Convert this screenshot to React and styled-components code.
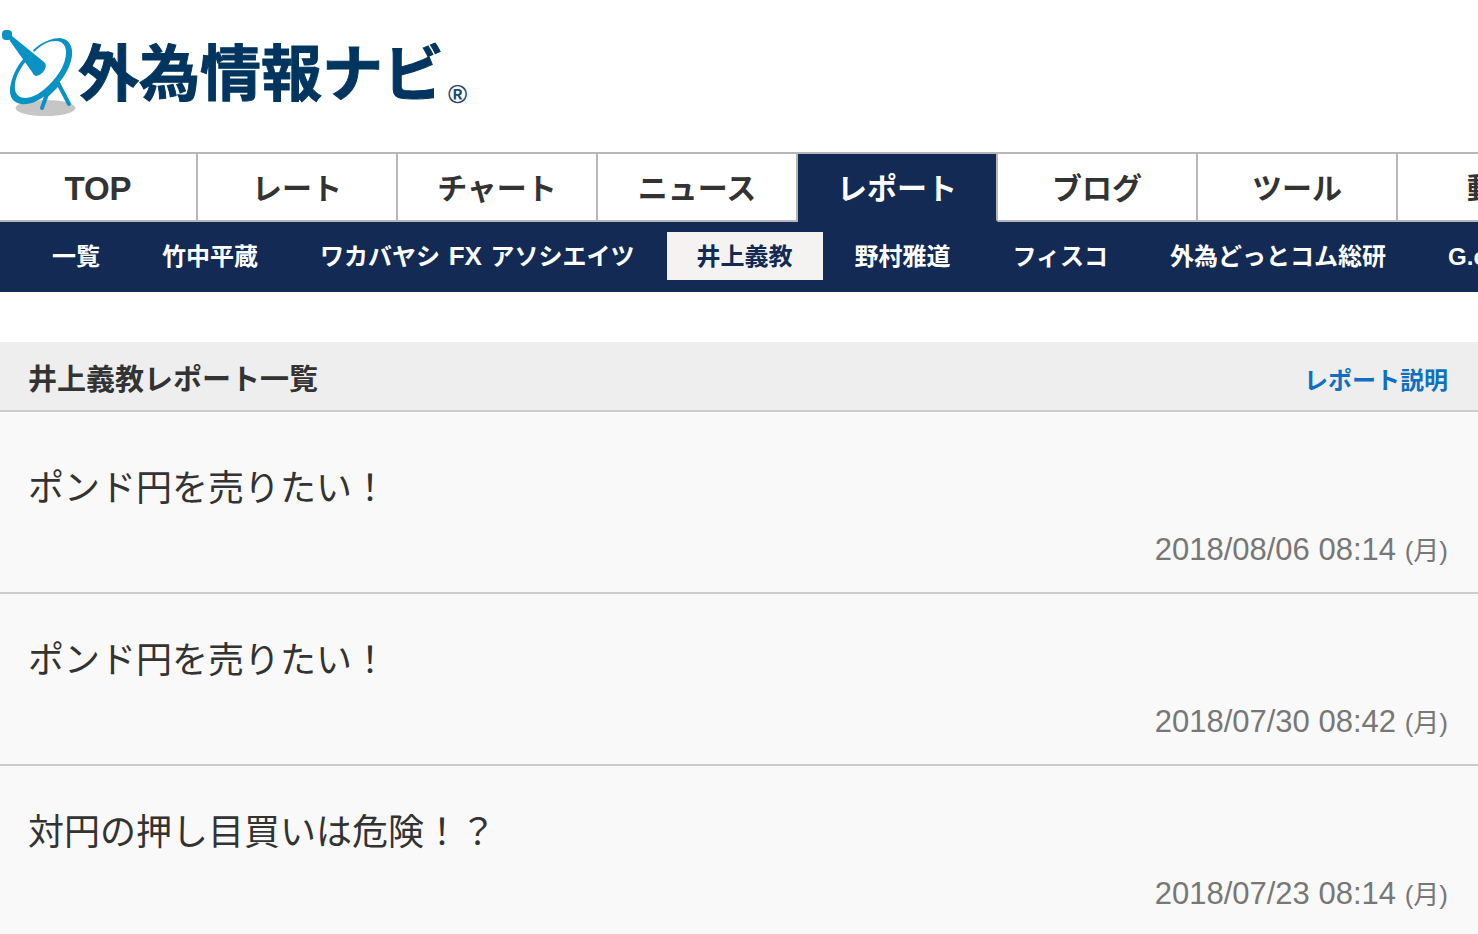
import React, { useState } from "react";
import styled, { createGlobalStyle } from "styled-components";

const GlobalStyle = createGlobalStyle`
  * {
    box-sizing: border-box;
  }
  body {
    margin: 0;
    background: #fff;
    color: #333;
    font-family: "Liberation Sans", "Noto Sans CJK JP", sans-serif;
    overflow-x: hidden;
  }
  a {
    color: inherit;
    text-decoration: none;
  }
`;

const Header = styled.header`
  height: 152px;
  padding-top: 28px;
`;

const Logo = styled.a`
  display: inline-flex;
  align-items: flex-start;
  color: #00355f;
  svg {
    flex: none;
  }
`;

const LogoText = styled.span`
  padding: 2px 4px 0 0;
  font-size: 61px;
  font-weight: 700;
  line-height: 90px;
  white-space: nowrap;
  -webkit-text-stroke: 1px #00355f;
`;

const Registered = styled.sup`
  align-self: flex-end;
  padding-bottom: 12px;
  font-size: 26px;
  font-weight: 700;
  line-height: 28px;
  color: #1f4a70;
`;

const TabBar = styled.nav`
  display: flex;
  border-top: 2px solid #b7b7b7;
  overflow: hidden;
`;

const Tab = styled.a`
  flex: 0 0 200px;
  height: 68px;
  border-right: 2px solid #b7b7b7;
  border-bottom: 2px solid ${({ $active }) => ($active ? "#122a54" : "#b7b7b7")};
  background: ${({ $active }) => ($active ? "#122a54" : "#fff")};
  color: ${({ $active }) => ($active ? "#fff" : "#333")};
  font-size: ${({ $latin }) => ($latin ? "33px" : "30px")};
  font-weight: 700;
  line-height: 70px;
  text-align: center;
  &:first-child {
    flex-basis: 198px;
  }
`;

const SubNav = styled.nav`
  display: flex;
  align-items: flex-start;
  gap: 2px;
  height: 70px;
  padding: 10px 22px;
  background: #122a54;
  overflow: hidden;
`;

const SubLink = styled.a`
  flex: none;
  padding: 0 30px;
  background: ${({ $active }) => ($active ? "#f4f3f2" : "transparent")};
  color: ${({ $active }) => ($active ? "#122a54" : "#fff")};
  font-size: 24px;
  font-weight: 700;
  line-height: 50px;
  height: 48px;
  white-space: nowrap;
`;

const Latin = styled.span`
  font-size: 26px;
  line-height: 1;
  margin: 0 2px;
`;

const Section = styled.main`
  margin-top: 50px;
`;

const SectionHead = styled.div`
  display: flex;
  align-items: center;
  justify-content: space-between;
  height: 70px;
  padding: 2px 30px 0 28px;
  background: #eee;
  border-bottom: 2px solid #ccc;
`;

const Heading = styled.h1`
  margin: 0;
  font-size: 29px;
  font-weight: 700;
`;

const HelpLink = styled.a`
  && {
    color: #1070c0;
  }
  padding-top: 2px;
  font-size: 24px;
  font-weight: 700;
`;

const List = styled.ul`
  margin: 0;
  padding: 10px 0 0;
  list-style: none;
  background: #f9f9f9;
`;

const Item = styled.li`
  border-bottom: 2px solid #ccc;
`;

const ItemLink = styled.a`
  display: flex;
  flex-direction: column;
  padding: 40px 30px 20px 28px;
`;

const Title = styled.span`
  font-size: 36px;
  line-height: 54px;
`;

const Time = styled.time`
  align-self: flex-end;
  margin-top: 12px;
  color: #777;
  font-size: 31px;
  line-height: 44px;
`;

const Day = styled.span`
  font-size: 26px;
  line-height: 1;
`;

const tabs = ["TOP", "レート", "チャート", "ニュース", "レポート", "ブログ", "ツール", "動画"];

const authors = [
  { id: "all", label: "一覧" },
  { id: "takenaka", label: "竹中平蔵" },
  {
    id: "wakabayashi",
    label: (
      <>
        ワカバヤシ <Latin>FX</Latin> アソシエイツ
      </>
    ),
  },
  { id: "inoue", label: "井上義教" },
  { id: "nomura", label: "野村雅道" },
  { id: "fisco", label: "フィスコ" },
  { id: "soken", label: "外為どっとコム総研" },
  { id: "gcom", label: "G.com" },
];

const reports = [
  { title: "ポンド円を売りたい！", date: "2018/08/06 08:14", day: "月" },
  { title: "ポンド円を売りたい！", date: "2018/07/30 08:42", day: "月" },
  { title: "対円の押し目買いは危険！？", date: "2018/07/23 08:14", day: "月" },
];

const DishIcon = () => (
  <svg width="78" height="90" viewBox="0 0 78 90" aria-hidden="true">
    <ellipse cx="45.5" cy="80" rx="30" ry="8" fill="#c6c6c6" />
    <g fill="none" stroke="#0a92c4" strokeLinecap="round">
      <path d="M46 69L42 80" strokeWidth="4" />
      <path d="M58 55L69 76" strokeWidth="4" />
      <path d="M46 68L58 56" strokeWidth="4" />
    </g>
    <path
      fill="#0a92c4"
      fillRule="evenodd"
      d="M33 22C43 13 53 10 60 10C69 11 73 18 72 28C70 43 59 57 46 67C37 74 29 77 21 76C11 74 8 66 11 55C13 46 18 37 24 30L26 33C20 41 16 48 15 56C14 64 17 70 26 70C34 69 41 65 49 57C59 47 66 36 66 24C66 17 62 13 56 13C49 13 42 16 34 24Z"
    />
    <path fill="#0a92c4" d="M9 9L12 8L44 34Q47 37 45 41Q42 47 36 48Q33 47 32 44L10 13Z" />
    <rect x="2" y="2" width="10" height="10" rx="4" fill="#0a92c4" />
  </svg>
);

const App = () => {
  const [tab, setTab] = useState("レポート");
  const [author, setAuthor] = useState("inoue");

  return (
    <>
      <GlobalStyle />
      <Header>
        <Logo href="#">
          <DishIcon />
          <LogoText>外為情報ナビ</LogoText>
          <Registered>®</Registered>
        </Logo>
      </Header>
      <TabBar>
        {tabs.map((name) => (
          <Tab
            href="#"
            key={name}
            $active={tab === name}
            $latin={name === "TOP"}
            onClick={() => setTab(name)}
          >
            {name}
          </Tab>
        ))}
      </TabBar>
      <SubNav>
        {authors.map(({ id, label }) => (
          <SubLink href="#" key={id} $active={author === id} onClick={() => setAuthor(id)}>
            {label}
          </SubLink>
        ))}
      </SubNav>
      <Section>
        <SectionHead>
          <Heading>井上義教レポート一覧</Heading>
          <HelpLink href="#">レポート説明</HelpLink>
        </SectionHead>
        <List>
          {reports.map(({ title, date, day }) => (
            <Item key={date}>
              <ItemLink href="#">
                <Title>{title}</Title>
                <Time>
                  {date} <Day>({day})</Day>
                </Time>
              </ItemLink>
            </Item>
          ))}
        </List>
      </Section>
    </>
  );
};

export default App;
